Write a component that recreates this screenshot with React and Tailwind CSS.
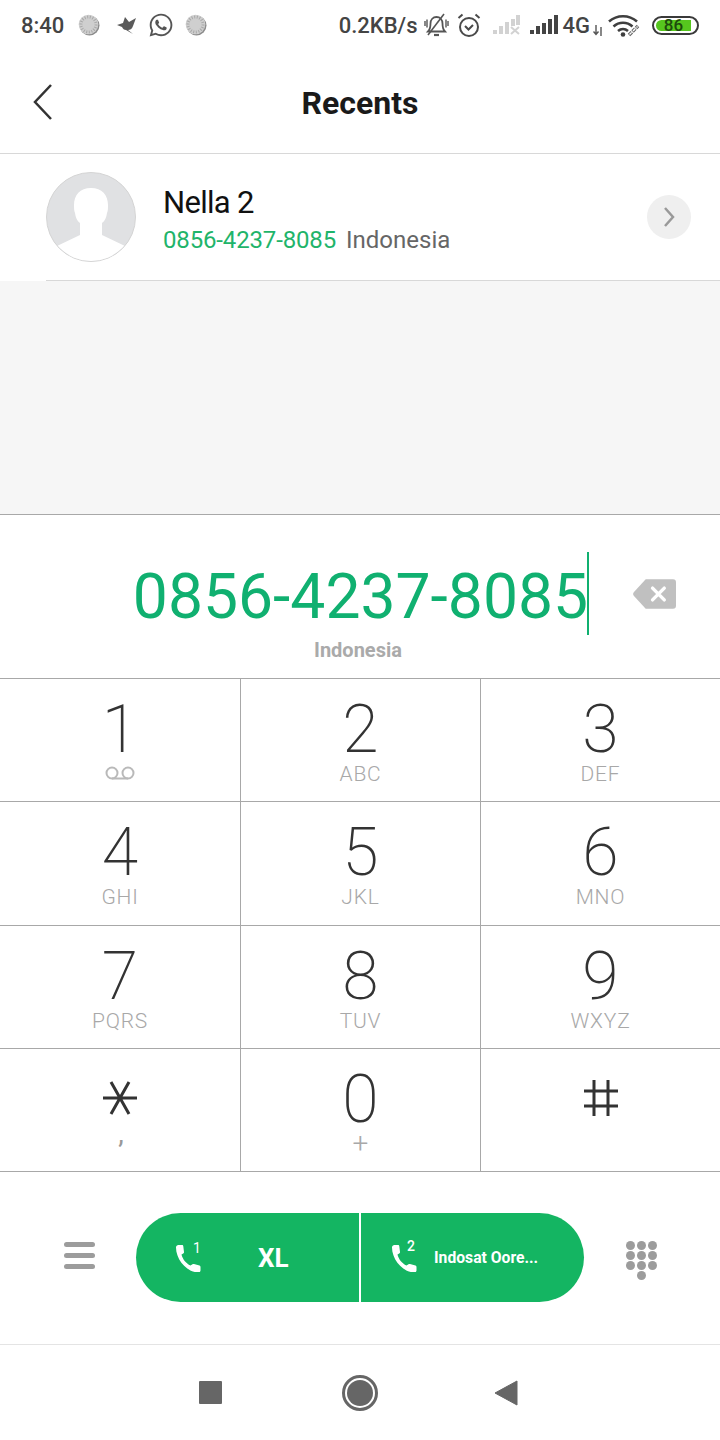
import React from "react";
import { FaWhatsapp } from "react-icons/fa";

const Spinner = () => (
  <svg width="22" height="22" viewBox="0 0 22 22">
    <circle cx="11.5" cy="11.5" r="10" fill="#8c8c8c" />
    <circle cx="10.5" cy="10.5" r="9.8" fill="#cfcfcf" />
    <circle cx="10.5" cy="10.5" r="7.5" fill="none" stroke="#a8a8a8" strokeWidth="3" strokeDasharray="1 1.6" />
  </svg>
);

const Bird = () => (
  <svg width="22" height="22" viewBox="0 0 22 22" fill="#5a5a5a">
    <path d="M1 11l6-2 2-6 4 5 7-4-3 8c-1 3-3 4-5 4l5 4-7-4c-2 0-3-1-4-3z" />
  </svg>
);

const BellOff = () => (
  <svg width="25" height="24" viewBox="0 0 25 24" fill="none" stroke="#555" strokeWidth="1.8">
    <path d="M4 18.500c2-2 2.500-4 2.500-8 0-4 2.500-6.500 6-6.500s6 2.500 6 6.500c0 4 .5 6 2.500 8z" />
    <path d="M10 22h5" strokeWidth="2.200" />
    <path d="M1 8v5M3 6.500v8M24 8v5M22 6.500v8" strokeWidth="1.400" />
    <path d="M4 22L20 1" strokeWidth="1.600" />
  </svg>
);

const Alarm = () => (
  <svg width="24" height="24" viewBox="0 0 24 24" fill="none" stroke="#4a4a4a" strokeWidth="2">
    <circle cx="12" cy="14" r="9" />
    <path d="M8 13l3.500 3.500L16 12M1.500 5l4-3.500M22.500 5l-4-3.500" />
  </svg>
);

const SignalOff = () => (
  <svg width="27" height="20" viewBox="0 0 27 20" fill="#d2d2d2">
    <rect x="0" y="15" width="4" height="4" />
    <rect x="6" y="11" width="4" height="8" />
    <rect x="12" y="7" width="4" height="12" />
    <rect x="18" y="4" width="4" height="7" />
    <rect x="23" y="0" width="4" height="10" />
    <path d="M18 12l8 7M26 12l-8 7" stroke="#d2d2d2" strokeWidth="2" fill="none" />
  </svg>
);

const Signal = () => (
  <svg width="28" height="20" viewBox="0 0 28 20" fill="#444">
    <rect x="0" y="15" width="4" height="4" />
    <rect x="6" y="11" width="4" height="8" />
    <rect x="12" y="8" width="4" height="11" />
    <rect x="18" y="4" width="4" height="15" />
    <rect x="24" y="0" width="4" height="19" />
  </svg>
);

const Arrows = () => (
  <svg width="10" height="11" viewBox="0 0 10 11" fill="none" stroke="#555" strokeWidth="1.400">
    <path d="M3 0v9M.5 6.500L3 9.500l2.500-3M8 11V2" />
  </svg>
);

const Wifi = () => (
  <svg width="32" height="23" viewBox="0 0 32 23" fill="none">
    <g stroke="#3f3f3f" strokeWidth="2.600" fill="none">
      <path d="M1 7.500c8-7 20-7 28 0" />
      <path d="M5.500 12.500c5.500-5 13.500-5 19 0" />
      <path d="M10 17c3-2.500 7-2.500 10 0" />
    </g>
    <circle cx="15" cy="20.500" r="2.300" fill="#3f3f3f" />
    <path d="M21 21l9-9" stroke="#666" strokeWidth="3.500" strokeDasharray="4 1" />
    <path d="M21.500 20.500l8-8" stroke="#fff" strokeWidth="1.400" strokeDasharray="3 2" />
  </svg>
);

const Voicemail = () => (
  <svg width="30" height="14" viewBox="0 0 30 14" fill="none" stroke="#b9b9b9" strokeWidth="2">
    <circle cx="7" cy="7" r="5.500" />
    <circle cx="23" cy="7" r="5.500" />
    <path d="M7 12.500h16" />
  </svg>
);

const Star = () => (
  <svg className="mb-[4px]" width="36" height="36" viewBox="0 0 36 36" fill="none" stroke="#333" strokeWidth="3">
    <path d="M1 18h34M9 2l18 32M27 2L9 34" />
  </svg>
);

const Hash = () => (
  <svg className="mb-[4px]" width="36" height="36" viewBox="0 0 36 36" fill="none" stroke="#333" strokeWidth="3">
    <path d="M1 11h34M1 26h34M11 0v36M25 0v36" />
  </svg>
);

const Phone = () => (
  <svg width="26" height="28" viewBox="0 0 26 28" fill="#fff">
    <path d="M1 3.500C1 2 2 1 3.500 1H7c.8 0 1.200.5 1.300 1.200L9 8c.1.700-.2 1.200-.8 1.500L6.500 10.500c1 4.500 4.500 9 9 11l2-1.300c.5-.3 1-.4 1.500-.1l5.500 1.400c.6.200 1 .7 1 1.400v3.600c0 1.200-1 2-2.200 2C11 28 1 15 1 3.500z" />
  </svg>
);

const Key = ({ d, sub, subClass, icon }) => (
  <div className="flex flex-col items-center h-full">
    <div className="h-[84px] pt-[18px] flex items-center justify-center text-[66px] leading-none font-[200] text-[#333]">
      {d}
    </div>
    {sub ? (
      <div className={subClass || "text-[21px] leading-none text-[#a8a8a8] font-light tracking-[0.8px] mt-[1px]"}>
        {sub}
      </div>
    ) : null}
    {icon}
  </div>
);

const rows = [
  [
    { d: "1", icon: <div className="mt-[3px]"><Voicemail /></div> },
    { d: "2", sub: "ABC" },
    { d: "3", sub: "DEF" },
  ],
  [
    { d: "4", sub: "GHI" },
    { d: "5", sub: "JKL" },
    { d: "6", sub: "MNO" },
  ],
  [
    { d: "7", sub: "PQRS" },
    { d: "8", sub: "TUV" },
    { d: "9", sub: "WXYZ" },
  ],
  [
    { d: <Star />, sub: ",", subClass: "text-[28px] leading-[21px] text-[#999] -translate-y-[10px] translate-x-[1px]" },
    { d: "0", sub: "+", subClass: "text-[28px] leading-[21px] text-[#a8a8a8] font-light" },
    { d: <Hash /> },
  ],
];

export default function App() {
  return (
    <div className="w-[720px] h-[1440px] bg-white flex flex-col font-['Roboto',sans-serif] overflow-hidden">
      {/* status bar */}
      <div className="h-[50px] flex items-center justify-between pl-[21px] pr-[21px] shrink-0">
        <div className="flex items-center">
          <span className="text-[22px] font-medium text-[#444] w-[57px]">8:40</span>
          <Spinner />
          <div className="w-[16px]" />
          <Bird />
          <div className="w-[10px]" />
          <FaWhatsapp size={26} color="#555" />
          <div className="w-[11px]" />
          <Spinner />
        </div>
        <div className="flex items-center">
          <span className="text-[22px] font-medium text-[#444] mr-[6px]">0.2KB/s</span>
          <BellOff />
          <div className="w-[8px]" />
          <Alarm />
          <div className="w-[12px]" />
          <SignalOff />
          <div className="w-[10px]" />
          <Signal />
          <span className="text-[22px] font-medium text-[#444] ml-[5px] mr-[3px]">4G</span>
          <div className="pt-[10px] flex"><Arrows /></div>
          <div className="w-[5px]" />
          <Wifi />
          <div className="w-[12px]" />
          <div className="w-[47px] h-[19px] rounded-full border-2 border-[#3a3a3a] p-[2px] flex">
            <div className="w-[35px] h-full rounded-l-full rounded-r-[6px] bg-[#56c61e] flex items-center justify-center text-[17px] font-medium text-[#1d4a0c] leading-none">
              86
            </div>
          </div>
        </div>
      </div>

      {/* header */}
      <div className="h-[104px] shrink-0 border-b border-[#d8d8d8] flex items-center justify-center relative pt-[2px]">
        <svg className="absolute left-[32px] top-[33px]" width="22" height="38" viewBox="0 0 22 38" fill="none" stroke="#333" strokeWidth="2.500">
          <path d="M19 2L3 19l16 17" />
        </svg>
        <span className="text-[32px] font-bold text-[#1a1a1a] leading-none">Recents</span>
      </div>

      {/* recent row */}
      <div className="h-[127px] shrink-0 bg-white">
        <div className="h-full ml-[46px] border-b border-[#d8d8d8] flex items-center pr-[29px]">
          <svg width="90" height="90" viewBox="0 0 90 90" className="shrink-0">
            <defs>
              <clipPath id="av"><circle cx="45" cy="45" r="44" /></clipPath>
            </defs>
            <circle cx="45" cy="45" r="44.500" fill="#e0e1e3" stroke="#d4d4d4" />
            <g clipPath="url(#av)" fill="#fff">
              <path d="M45 16c-11 0-17 7-17 17 0 3 0 6 1 8 .5 4 2 8 5 10v12L11 74v16h68V74L56 63V51c3-2 4.500-6 5-10 1-2 1-5 1-8 0-10-6-17-17-17z" />
            </g>
          </svg>
          <div className="ml-[27px] flex-1 flex flex-col mt-[6px]">
            <div className="text-[31px] leading-[36px] text-[#111] tracking-[-0.7px]">Nella 2</div>
            <div className="text-[24px] leading-[30px] mt-[4px] flex">
              <span className="text-[#1fb46a] tracking-[-0.15px]">0856-4237-8085</span>
              <span className="text-[#666] ml-[10px]">Indonesia</span>
            </div>
          </div>
          <div className="w-[44px] h-[44px] rounded-full bg-[#efefef] flex items-center justify-center">
            <svg width="14" height="22" viewBox="0 0 14 22" fill="none" stroke="#999" strokeWidth="2.500">
              <path d="M3 2l8 9-8 9" />
            </svg>
          </div>
        </div>
      </div>

      {/* gray area */}
      <div className="h-[234px] shrink-0 bg-[#f6f6f6] border-b border-[#a8a8a8]" />

      {/* number display */}
      <div className="h-[163px] shrink-0 relative flex flex-col items-center">
        <div className="h-[83px] mt-[37px] flex items-center ml-[2px]">
          <span className="text-[62.400px] leading-none text-[#10b070] pt-[8px]">0856-4237-8085</span>
          <div className="w-[2px] h-[83px] bg-[#10b070] -ml-[1px]" />
        </div>
        <div className="text-[20px] leading-none font-bold text-[#aaaaaa] mt-[5px] -ml-[4px]">Indonesia</div>
        <svg className="absolute left-[633px] top-[64px]" width="43" height="30" viewBox="0 0 44 30">
          <path d="M13 0h28a3 3 0 0 1 3 3v24a3 3 0 0 1-3 3H13L1 17a3 3 0 0 1 0-4z" fill="#c0c0c0" />
          <path d="M20 9l12 12M32 9L20 21" stroke="#fff" strokeWidth="3.500" strokeLinecap="round" />
        </svg>
      </div>

      {/* keypad */}
      <div className="shrink-0 border-t border-[#a8a8a8]">
        {rows.map((row, i) => (
          <div
            key={i}
            className={`grid grid-cols-[241px_240px_239px] border-b border-[#a8a8a8] ${i === 1 ? "h-[124px]" : "h-[123px]"}`}
          >
            {row.map((k, j) => (
              <div key={j} className={j < 2 ? "border-r border-[#a8a8a8]" : ""}>
                <Key {...k} />
              </div>
            ))}
          </div>
        ))}
      </div>

      {/* action row */}
      <div className="h-[174px] shrink-0 flex items-center border-b border-[#e4e4e4] -mt-[1px]">
        <div className="w-[136px] flex flex-col items-start gap-[6px] pl-[64px] -mt-[4px]">
          <div className="w-[31px] h-[5px] rounded-full bg-[#9c9c9c]" />
          <div className="w-[31px] h-[5px] rounded-full bg-[#9c9c9c]" />
          <div className="w-[31px] h-[5px] rounded-full bg-[#9c9c9c]" />
        </div>
        <div className="w-[448px] h-[89px] rounded-full bg-[#14b562] flex overflow-hidden text-white">
          <div className="w-[225px] border-r-2 border-white flex items-center relative pl-[39px]">
            <Phone />
            <span className="absolute left-[57px] top-[28px] text-[14px] leading-none">1</span>
            <span className="ml-[57px] text-[26px] font-bold leading-none">XL</span>
          </div>
          <div className="flex-1 flex items-center relative pl-[30px]">
            <Phone />
            <span className="absolute left-[46px] top-[26px] text-[14px] font-medium leading-none">2</span>
            <span className="ml-[17px] text-[15.700px] font-bold leading-none">Indosat Oore...</span>
          </div>
        </div>
        <div className="flex-1 flex pl-[42px]">
          <div className="grid grid-cols-[9px_9px_9px] gap-x-[2px] gap-y-[1px] mt-[5px]">
            {[0, 1, 2, 3, 4, 5, 6, 7, 8].map((n) => (
              <div key={n} className="w-[9px] h-[9px] rounded-full bg-[#9c9c9c]" />
            ))}
            <div className="w-[9px] h-[9px] rounded-full bg-[#9c9c9c] col-start-2" />
          </div>
        </div>
      </div>

      {/* nav bar */}
      <div className="flex-1 flex items-center justify-center pr-[3px]">
        <div className="w-[23px] h-[23px] bg-[#666] rounded-[1px] mr-[120px]" />
        <div className="w-[36px] h-[36px] rounded-full border-[3px] border-[#666] p-[2px]">
          <div className="w-full h-full rounded-full bg-[#666]" />
        </div>
        <svg className="ml-[116px]" width="24" height="26" viewBox="0 0 24 26">
          <path d="M23 1v24L1 13z" fill="#666" stroke="#666" strokeWidth="1" strokeLinejoin="round" />
        </svg>
      </div>
    </div>
  );
}
